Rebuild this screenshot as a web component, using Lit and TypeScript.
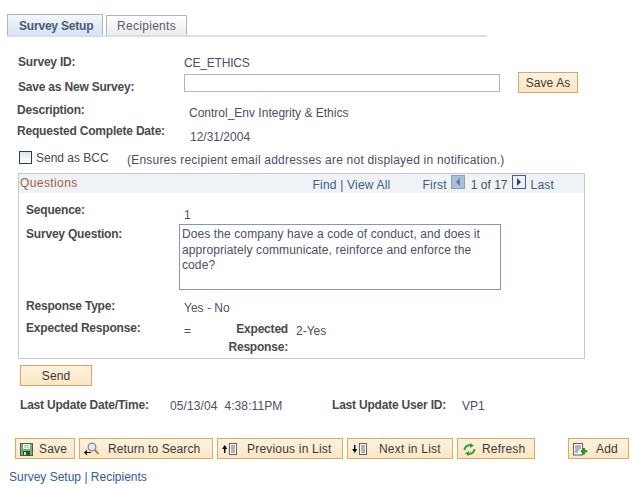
import { LitElement, html, css, svg } from "lit";
import { customElement } from "lit/decorators.js";

const docLines = svg`<rect x="7.500" y="2.500" width="7" height="11" fill="#fff" stroke="#666" stroke-width="1.100"/><path d="M9 5h4M9 7h4M9 9h4M9 11h4" stroke="#666"/>`;

const icons = {
  save: svg`<rect x="0.500" y="2.500" width="12" height="12" fill="#74b074" stroke="#4a5f4a"/><rect x="3" y="3" width="7" height="5" fill="#eef4ee"/><path d="M4 4.500h5M4 6.200h5" stroke="#9aa89a" stroke-width=".7"/><rect x="3" y="10" width="7" height="4.500" fill="#2f4f2f"/><rect x="4" y="11" width="2" height="3" fill="#cfe0cf"/>`,
  search: svg`<circle cx="8" cy="6" r="3.800" fill="#dfe8f2" stroke="#7f8f8f" stroke-width="1.300"/><path d="M10.800 9l3.700 4" stroke="#a89040" stroke-width="2"/><path d="M7 11.500H.8M3 9.300L.8 11.500 3 13.700" fill="none" stroke="#000" stroke-width="1.200"/>`,
  prev: svg`<path d="M2.700 12V7" stroke="#000" stroke-width="1.400"/><path d="M.2 8l2.500-4 2.500 4z" fill="#000"/>${docLines}`,
  next: svg`<path d="M2.700 4v5" stroke="#000" stroke-width="1.400"/><path d="M.2 8l2.500 4 2.500-4z" fill="#000"/>${docLines}`,
  refresh: svg`<g transform="translate(1 2)"><path d="M1.500 7a5 5 0 0 1 6.500-4.500" fill="none" stroke="#35a035" stroke-width="2"/><path d="M7 0l4 2.500-4 2.500z" fill="#35a035"/><path d="M11.500 6a5 5 0 0 1-6.500 4.500" fill="none" stroke="#35a035" stroke-width="2"/><path d="M6 13L2 10.500 6 8z" fill="#35a035"/></g>`,
  add: svg`<rect x="0.500" y="2.500" width="9" height="11.500" fill="#fff" stroke="#666" stroke-width="1.100"/><path d="M2 5h6M2 7h6M2 9h4M2 11h3" stroke="#666"/><path d="M11 7v6.500M7.800 10.200h6.400" stroke="#1f9a2f" stroke-width="2.200"/>`,
};

@customElement("app-root")
export class AppRoot extends LitElement {
  static styles = css`
    :host {
      display: block;
      width: 635px;
      height: 489px;
      overflow: hidden;
      background: #fff;
      font: 12px/14px "Liberation Sans", Arial, sans-serif;
      color: #4d4d66;
    }
    .tabs {
      display: flex;
      gap: 3px;
      width: 480px;
      height: 21px;
      margin: 14px 0 0 7px;
      border-bottom: 2px solid #d3e1ef;
    }
    .tab {
      box-sizing: border-box;
      width: 81px;
      margin-top: 1px;
      padding: 3px 0 0 10px;
      border: 1px solid #a9b6c6;
      border-bottom: 0;
      background: linear-gradient(#fff, #ececec);
      color: #5a5a78;
      letter-spacing: 0.3px;
    }
    .tab.on {
      width: 96px;
      margin-top: 0;
      padding: 4px 0 0 11px;
      font-weight: bold;
      background: linear-gradient(#f3f7fb, #d6e4f3);
      color: #4a5a78;
      letter-spacing: -0.2px;
    }
    .form {
      height: 90px;
      margin-top: 18px;
    }
    .row {
      display: flex;
      padding-left: 18px;
    }
    .label {
      font-weight: bold;
      color: #4a4a4a;
      letter-spacing: -0.2px;
    }
    .lab {
      width: 166px;
    }
    .r1 {
      height: 17px;
    }
    .r1 .val {
      margin-top: 1px;
      letter-spacing: -0.2px;
    }
    .r2 {
      height: 31px;
    }
    .r2 .lab {
      margin-top: 8px;
    }
    .r2 input {
      box-sizing: border-box;
      width: 316px;
      height: 18px;
      margin: 2px 18px 0 0;
      border: 1px solid #b5b5b5;
      padding: 0;
    }
    .r3,
    .r4 {
      height: 21px;
      padding-left: 17px;
    }
    .r3 .val {
      margin: 3px 0 0 6px;
    }
    .r4 .lab {
      width: 173px;
    }
    .r4 .val {
      margin-top: 6px;
    }
    .bcc {
      height: 22px;
      margin-top: 6px;
      padding-left: 19px;
    }
    .check {
      box-sizing: border-box;
      width: 13px;
      height: 13px;
      margin-right: 4px;
      border: 1px solid #1f3f5f;
      background: linear-gradient(#e4e4e0, #fff);
    }
    .bcc .text {
      width: 91px;
      font-weight: normal;
      letter-spacing: 0;
    }
    .note {
      margin-top: 2px;
      letter-spacing: 0.21px;
    }
    .btn {
      box-sizing: border-box;
      display: flex;
      align-items: center;
      height: 21px;
      border: 1px solid #dba66a;
      background: linear-gradient(#fdf2df, #fbe6c4);
      color: #3a3a3a;
      letter-spacing: 0.1px;
    }
    .save-as {
      justify-content: center;
      width: 60px;
    }
    .box {
      box-sizing: border-box;
      width: 567px;
      height: 186px;
      margin-left: 18px;
      border: 1px solid #c4cad0;
    }
    .box-head {
      display: flex;
      justify-content: space-between;
      height: 19px;
      padding-left: 1px;
      background: #eff3f5;
    }
    .title {
      margin-top: 2px;
      color: #a0603a;
      letter-spacing: 0.4px;
    }
    .nav {
      display: flex;
      margin-top: 4px;
      padding-right: 30px;
      color: #3d5a8a;
      letter-spacing: 0.2px;
    }
    .nav .find {
      margin-right: 32px;
    }
    .nav .count {
      letter-spacing: 0;
      color: #4d4d66;
    }
    .arrow {
      box-sizing: border-box;
      width: 14px;
      height: 14px;
      margin: -3px 6px 0 4px;
      border: 1px solid #8aa0b8;
      background: #a8bfd6;
    }
    .arrow.last {
      margin: -3px 5px 0 4px;
      border-color: #4a5a8a;
      background: #eef2f8;
    }
    .arrow svg {
      display: block;
    }
    .q {
      padding: 10px 0 0 7px;
    }
    .qrow {
      display: flex;
    }
    .qrow .lab {
      width: 158px;
    }
    .seq {
      height: 21px;
    }
    .seq .val {
      margin-top: 5px;
    }
    .sq {
      height: 66px;
    }
    .qrow.sq .lab {
      width: 153px;
      margin-top: 3px;
    }
    .area {
      box-sizing: border-box;
      width: 322px;
      height: 66px;
      padding: 2px 2px 0;
      border: 1px solid #7d9ab8;
      line-height: 15.5px;
      letter-spacing: 0.1px;
    }
    .rt {
      margin-top: 9px;
      height: 22px;
    }
    .rt .val {
      margin-top: 2px;
    }
    .er .val {
      margin-top: 3px;
    }
    .er .eq {
      width: 26px;
    }
    .er .right {
      width: 78px;
      margin-top: -1px;
      text-align: right;
      line-height: 18px;
    }
    .er .two {
      margin-left: 8px;
    }
    .send {
      justify-content: center;
      width: 72px;
      margin: 6px 0 0 20px;
    }
    .updated {
      display: flex;
      padding-left: 20px;
      margin-top: 12px;
      height: 14px;
    }
    .updated .val {
      margin-top: 1px;
    }
    .updated .k1 {
      width: 150px;
    }
    .updated .v1 {
      width: 162px;
      letter-spacing: 0.1px;
    }
    .updated .k2 {
      width: 130px;
    }
    .toolbar {
      display: flex;
      gap: 4px;
      margin: 26px 0 0 15px;
    }
    .toolbar .btn {
      align-items: flex-start;
      padding: 2px 0 0 4px;
      border-color: #e0aa58;
      letter-spacing: 0.2px;
    }
    .toolbar svg {
      flex: none;
    }
    .toolbar span {
      margin-top: 1px;
    }
    .b-save {
      width: 60px;
    }
    .b-save span {
      margin-left: 3px;
    }
    .b-search {
      width: 134px;
    }
    .b-search span {
      margin-left: 8px;
      letter-spacing: 0.1px;
    }
    .b-prev {
      width: 126px;
    }
    .b-prev span {
      margin-left: 9px;
    }
    .b-next {
      width: 106px;
    }
    .b-next span {
      margin-left: 11px;
    }
    .b-refresh {
      width: 78px;
    }
    .b-refresh span {
      margin-left: 4px;
    }
    .b-add {
      width: 61px;
      margin-left: 29px;
    }
    .b-add span {
      margin-left: 7px;
    }
    .links {
      margin: 11px 0 0 9px;
      color: #2f5aa8;
    }
    .links i {
      font-style: normal;
      color: #5a3fa0;
    }
  `;

  private toolButton(icon: keyof typeof icons, text: string, cls: string) {
    return html`<div class="btn ${cls}">
      <svg width="16" height="16" viewBox="0 0 16 16">${icons[icon]}</svg>
      <span>${text}</span>
    </div>`;
  }

  render() {
    return html`
      <div class="tabs">
        <div class="tab on">Survey Setup</div>
        <div class="tab">Recipients</div>
      </div>
      <div class="form">
        <div class="row r1">
          <div class="label lab">Survey ID:</div>
          <div class="val">CE_ETHICS</div>
        </div>
        <div class="row r2">
          <div class="label lab">Save as New Survey:</div>
          <input type="text" />
          <div class="btn save-as">Save As</div>
        </div>
        <div class="row r3">
          <div class="label lab">Description:</div>
          <div class="val">Control_Env Integrity &amp; Ethics</div>
        </div>
        <div class="row r4">
          <div class="label lab">Requested Complete Date:</div>
          <div class="val">12/31/2004</div>
        </div>
      </div>
      <div class="row bcc">
        <div class="check"></div>
        <div class="label text">Send as BCC</div>
        <div class="note">(Ensures recipient email addresses are not displayed in notification.)</div>
      </div>
      <div class="box">
        <div class="box-head">
          <div class="title">Questions</div>
          <div class="nav">
            <div class="find">Find | View All</div>
            <div>First</div>
            <div class="arrow">
              <svg width="12" height="12" viewBox="0 0 12 12"><path d="M8 2v8L4 6z" fill="#5f7f9f" /></svg>
            </div>
            <div class="count">1 of 17</div>
            <div class="arrow last">
              <svg width="12" height="12" viewBox="0 0 12 12"><path d="M4 2v8l4-4z" fill="#2f3f7f" /></svg>
            </div>
            <div>Last</div>
          </div>
        </div>
        <div class="q">
          <div class="qrow seq">
            <div class="label lab">Sequence:</div>
            <div class="val">1</div>
          </div>
          <div class="qrow sq">
            <div class="label lab">Survey Question:</div>
            <div class="area">
              Does the company have a code of conduct, and does it appropriately communicate, reinforce and enforce the
              code?
            </div>
          </div>
          <div class="qrow rt">
            <div class="label lab">Response Type:</div>
            <div class="val">Yes - No</div>
          </div>
          <div class="qrow er">
            <div class="label lab">Expected Response:</div>
            <div class="val eq">=</div>
            <div class="label right">Expected Response:</div>
            <div class="val two">2-Yes</div>
          </div>
        </div>
      </div>
      <div class="btn send">Send</div>
      <div class="updated">
        <div class="label k1">Last Update Date/Time:</div>
        <div class="val v1">05/13/04&nbsp; 4:38:11PM</div>
        <div class="label k2">Last Update User ID:</div>
        <div class="val">VP1</div>
      </div>
      <div class="toolbar">
        ${this.toolButton("save", "Save", "b-save")}
        ${this.toolButton("search", "Return to Search", "b-search")}
        ${this.toolButton("prev", "Previous in List", "b-prev")}
        ${this.toolButton("next", "Next in List", "b-next")}
        ${this.toolButton("refresh", "Refresh", "b-refresh")}
        ${this.toolButton("add", "Add", "b-add")}
      </div>
      <div class="links">Survey Setup <i>|</i> Recipients</div>
    `;
  }
}
